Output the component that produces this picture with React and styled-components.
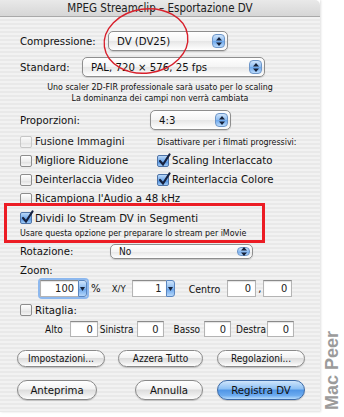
import React from 'react';
import styled, { createGlobalStyle } from 'styled-components';

const GlobalStyle = createGlobalStyle`
  html, body {
    margin: 0;
    padding: 0;
    background: #fff;
  }
  body {
    font-family: "DejaVu Sans Condensed", "Liberation Sans", sans-serif;
    font-stretch: condensed;
    color: #111;
  }
`;

const Page = styled.div`
  display: flex;
  width: 344px;
  height: 417px;
  background: #fff;
  overflow: hidden;
`;

const Window = styled.div`
  position: relative;
  width: 320px;
  height: 412px;
  display: flex;
  flex-direction: column;
  box-shadow: 1px 0 2px rgba(0, 0, 0, 0.12);
`;

const TitleBar = styled.div`
  height: 17px;
  box-sizing: border-box;
  display: flex;
  align-items: center;
  justify-content: center;
  font-size: 11.5px;
  color: #202020;
  background: linear-gradient(180deg, #e9e9e9 0%, #d6d6d6 100%);
  border-bottom: 1px solid #a9a9a9;
  border-top-right-radius: 5px;
`;

const Body = styled.div`
  flex: 1;
  padding-left: 20px;
  background: repeating-linear-gradient(180deg, #f2f2f2 0 2px, #e9e9e9 2px 4px);
`;

const Row = styled.div`
  display: flex;
  align-items: center;
  height: ${(p) => p.$h || 18}px;
  margin-top: ${(p) => p.$mt || 0}px;
  margin-left: ${(p) => p.$ml || 0}px;
  font-size: 11.3px;
`;

const Label = styled.span`
  width: ${(p) => (p.$w ? `${p.$w}px` : 'auto')};
  margin-left: ${(p) => p.$ml || 0}px;
  flex-shrink: 0;
  white-space: nowrap;
  font-size: ${(p) => p.$fs || 11.3}px;
`;

const Info = styled.div`
  margin-top: 5px;
  margin-left: -20px;
  font-size: 8.8px;
  line-height: 11px;
  text-align: center;
  width: 320px;
`;

const PopupBox = styled.div`
  display: flex;
  align-items: center;
  box-sizing: border-box;
  width: ${(p) => p.$w}px;
  height: ${(p) => p.$h || 20}px;
  border: 1px solid #8e8e8e;
  border-radius: 5px;
  background: linear-gradient(180deg, #ffffff 0%, #f4f4f4 50%, #e6e6e6 51%, #ffffff 100%);
  box-shadow: 0 1px 1px rgba(0, 0, 0, 0.15);
  padding: 0 2px 0 ${(p) => p.$pl || 8}px;
  font-size: ${(p) => p.$fs || 11.3}px;
`;

const PopupText = styled.span`
  flex: 1;
  white-space: nowrap;
`;

const ArrowCap = styled.span`
  display: flex;
  align-items: center;
  justify-content: center;
  width: 13px;
  height: calc(100% - 4px);
  border-radius: 4px;
  background: linear-gradient(180deg, #cfe4fb 0%, #8dbcf1 50%, #6aa6ec 51%, #b9dafc 100%);
  border: 1px solid #6d96c9;
  box-sizing: border-box;
`;

const UpDown = () => (
  <svg width="6" height="9" viewBox="0 0 6 9">
    <path d="M3 0 L6 3.5 L0 3.5 Z M0 5.5 L6 5.5 L3 9 Z" fill="#16223a" />
  </svg>
);

const Popup = ({ w, h, fs, pl, children }) => (
  <PopupBox $w={w} $h={h} $fs={fs} $pl={pl}>
    <PopupText>{children}</PopupText>
    <ArrowCap>
      <UpDown />
    </ArrowCap>
  </PopupBox>
);

const CheckGrid = styled.div`
  display: grid;
  grid-template-columns: 137px 1fr;
  grid-auto-rows: 19px;
  margin-top: 2px;
  font-size: 11.3px;
`;

const CheckItem = styled.label`
  display: flex;
  align-items: center;
  gap: 3px;
  white-space: nowrap;
  color: ${(p) => (p.$dim ? '#222' : '#111')};
`;

const Box = styled.span`
  position: relative;
  width: 12px;
  height: 12px;
  box-sizing: border-box;
  flex-shrink: 0;
  border-radius: 2px;
  border: 1px solid ${(p) => (p.$on ? '#4f74a8' : p.$dim ? '#b8b8b8' : '#8d8d8d')};
  background: ${(p) =>
    p.$on
      ? 'linear-gradient(180deg, #b9d7f7 0%, #6ea7ea 55%, #4d8fe0 56%, #9fcaf6 100%)'
      : 'linear-gradient(180deg, #ffffff 0%, #ececec 55%, #dedede 56%, #f6f6f6 100%)'};
  opacity: ${(p) => (p.$dim ? 0.7 : 1)};
`;

const Tick = styled.svg`
  position: absolute;
  left: 0;
  top: -3px;
`;

const Check = ({ on, dim, children }) => (
  <CheckItem $dim={dim}>
    <Box $on={on} $dim={dim}>
      {on && (
        <Tick width="13" height="14" viewBox="0 0 13 14">
          <path d="M2 8 L5 11.5 L11.5 1.5" stroke="#17223f" strokeWidth="2.2" fill="none" strokeLinecap="round" />
        </Tick>
      )}
    </Box>
    {children}
  </CheckItem>
);

const SmallNote = styled.span`
  display: flex;
  align-items: center;
  font-size: 8.8px;
  white-space: nowrap;
`;

const Highlight = styled.section`
  position: relative;
  box-sizing: border-box;
  width: 261px;
  height: 40px;
  margin-top: -5px;
  margin-left: -16px;
  padding: 3px 0 0 13px;
  border: 3px solid #ec1c24;
`;

const FieldBox = styled.span`
  display: flex;
  align-items: center;
  justify-content: flex-end;
  box-sizing: border-box;
  width: ${(p) => p.$w}px;
  height: ${(p) => p.$h || 17}px;
  margin-left: ${(p) => p.$ml || 0}px;
  padding-right: 4px;
  background: #fff;
  border: 1px solid #b4b4b4;
  border-top-color: #8a8a8a;
  box-shadow: inset 0 1px 1px rgba(0, 0, 0, 0.12);
  font-size: 11px;
  color: #222;
`;

const Combo = styled.span`
  display: flex;
  align-items: stretch;
  height: 17px;
  margin-left: ${(p) => p.$ml || 0}px;
  border-radius: 2px;
  box-shadow: ${(p) => (p.$focus ? '0 0 0 2px #8db8ee' : 'none')};
`;

const ComboField = styled(FieldBox)`
  height: 17px;
  border-right: none;
`;

const ComboArrow = styled.span`
  display: flex;
  align-items: center;
  justify-content: center;
  width: 9px;
  box-sizing: border-box;
  border: 1px solid #5b86bf;
  border-radius: 0 3px 3px 0;
  background: linear-gradient(180deg, #cfe4fb 0%, #86b8f0 50%, #66a2ea 51%, #b6d8fb 100%);
`;

const Down = () => (
  <svg width="5" height="4" viewBox="0 0 5 4">
    <path d="M0 0 L5 0 L2.5 4 Z" fill="#16223a" />
  </svg>
);

const ButtonRow = styled.div`
  display: flex;
  align-items: center;
  height: ${(p) => p.$h}px;
  margin-top: ${(p) => p.$mt}px;
  margin-left: -3px;
`;

const Button = styled.button`
  box-sizing: border-box;
  width: ${(p) => p.$w}px;
  height: 100%;
  margin: 0 0 0 ${(p) => p.$ml || 0}px;
  padding: 0;
  border-radius: 10px;
  border: 1px solid ${(p) => (p.$primary ? '#3d6aa6' : '#8a8a8a')};
  background: ${(p) =>
    p.$primary
      ? 'linear-gradient(180deg, #cfe5fb 0%, #8cc0f4 45%, #4f95e6 50%, #6cabef 80%, #b7dcfd 100%)'
      : 'linear-gradient(180deg, #ffffff 0%, #f2f2f2 45%, #dcdcdc 50%, #eeeeee 80%, #ffffff 100%)'};
  box-shadow: 0 1px 1px rgba(0, 0, 0, 0.18);
  font-family: inherit;
  font-stretch: condensed;
  font-size: ${(p) => p.$fs || 11}px;
  color: #111;
  white-space: nowrap;
`;

const Ellipse = styled.svg`
  position: absolute;
  left: 0;
  top: 0;
  pointer-events: none;
`;

const Side = styled.div`
  flex: 1;
  display: flex;
  align-items: flex-end;
  justify-content: center;
  padding-bottom: 7px;
`;

const Watermark = styled.span`
  writing-mode: vertical-rl;
  transform: rotate(180deg);
  font-family: "Liberation Sans", Arial, sans-serif;
  font-stretch: normal;
  font-weight: bold;
  font-size: 18px;
  line-height: 18px;
  color: #9b9b9b;
  white-space: nowrap;
`;

export default function App() {
  return (
    <>
      <GlobalStyle />
      <Page>
        <Window>
          <TitleBar>MPEG Streamclip – Esportazione DV</TitleBar>
          <Body>
            <Row $h={20} $mt={14}>
              <Label $w={88}>Compressione:</Label>
              <Popup w={120}>DV (DV25)</Popup>
            </Row>
            <Row $h={20} $mt={6}>
              <Label $w={62}>Standard:</Label>
              <Popup w={183}>PAL, 720 × 576, 25 fps</Popup>
            </Row>
            <Info>
              Uno scaler 2D-FIR professionale sarà usato per lo scaling
              <br />
              La dominanza dei campi non verrà cambiata
            </Info>
            <Row $h={20} $mt={6}>
              <Label $w={130}>Proporzioni:</Label>
              <Popup w={81}>4:3</Popup>
            </Row>
            <CheckGrid>
              <Check dim>Fusione Immagini</Check>
              <SmallNote>Disattivare per i filmati progressivi:</SmallNote>
              <Check>Migliore Riduzione</Check>
              <Check on>Scaling Interlaccato</Check>
              <Check>Deinterlaccia Video</Check>
              <Check on>Reinterlaccia Colore</Check>
              <Check>Ricampiona l'Audio a 48 kHz</Check>
            </CheckGrid>
            <Highlight>
              <Row $h={18}>
                <Check on>Dividi lo Stream DV in Segmenti</Check>
              </Row>
              <Row $h={12}>
                <Label $fs={8.8}>Usare questa opzione per preparare lo stream per iMovie</Label>
              </Row>
            </Highlight>
            <Row $h={16}>
              <Label $w={90}>Rotazione:</Label>
              <Popup w={143} h={15} fs={10} pl={8}>No</Popup>
            </Row>
            <Row $h={18} $mt={2}>
              <Label>Zoom:</Label>
            </Row>
            <Row $h={17} $mt={1} $ml={20}>
              <Combo $focus>
                <ComboField $w={38}>100</ComboField>
                <ComboArrow>
                  <Down />
                </ComboArrow>
              </Combo>
              <Label $ml={4}>%</Label>
              <Label $ml={11} $fs={9.5}>X/Y</Label>
              <Combo $ml={6}>
                <ComboField $w={34}>1</ComboField>
                <ComboArrow>
                  <Down />
                </ComboArrow>
              </Combo>
              <Label $ml={14} $fs={10.5}>Centro</Label>
              <FieldBox $w={29} $ml={7}>0</FieldBox>
              <Label $ml={2}>,</Label>
              <FieldBox $w={29} $ml={2}>0</FieldBox>
            </Row>
            <Row $h={18} $mt={4}>
              <Check>Ritaglia:</Check>
            </Row>
            <Row $h={16} $mt={2} $ml={25} style={{ fontSize: 10 }}>
              <Label $fs={10}>Alto</Label>
              <FieldBox $w={28} $h={16} $ml={7}>0</FieldBox>
              <Label $fs={10} $ml={2}>Sinistra</Label>
              <FieldBox $w={27} $h={16} $ml={3}>0</FieldBox>
              <Label $fs={10} $ml={10}>Basso</Label>
              <FieldBox $w={27} $h={16} $ml={4}>0</FieldBox>
              <Label $fs={10} $ml={5}>Destra</Label>
              <FieldBox $w={27} $h={16} $ml={1}>0</FieldBox>
            </Row>
            <ButtonRow $h={17} $mt={13}>
              <Button $w={88} $fs={10}>Impostazioni...</Button>
              <Button $w={85} $ml={13} $fs={10}>Azzera Tutto</Button>
              <Button $w={88} $ml={14} $fs={10}>Regolazioni...</Button>
            </ButtonRow>
            <ButtonRow $h={20} $mt={13}>
              <Button $w={80} $fs={11.3}>Anteprima</Button>
              <Button $w={68} $ml={38} $fs={11.3}>Annulla</Button>
              <Button $w={88} $ml={14} $fs={11.3} $primary>Registra DV</Button>
            </ButtonRow>
          </Body>
          <Ellipse width="320" height="90" viewBox="0 0 320 90">
            <ellipse cx="146" cy="41" rx="42" ry="32" transform="rotate(-8 146 41)" fill="none" stroke="#d8202c" strokeWidth="1.4" />
          </Ellipse>
        </Window>
        <Side>
          <Watermark>Mac Peer</Watermark>
        </Side>
      </Page>
    </>
  );
}
